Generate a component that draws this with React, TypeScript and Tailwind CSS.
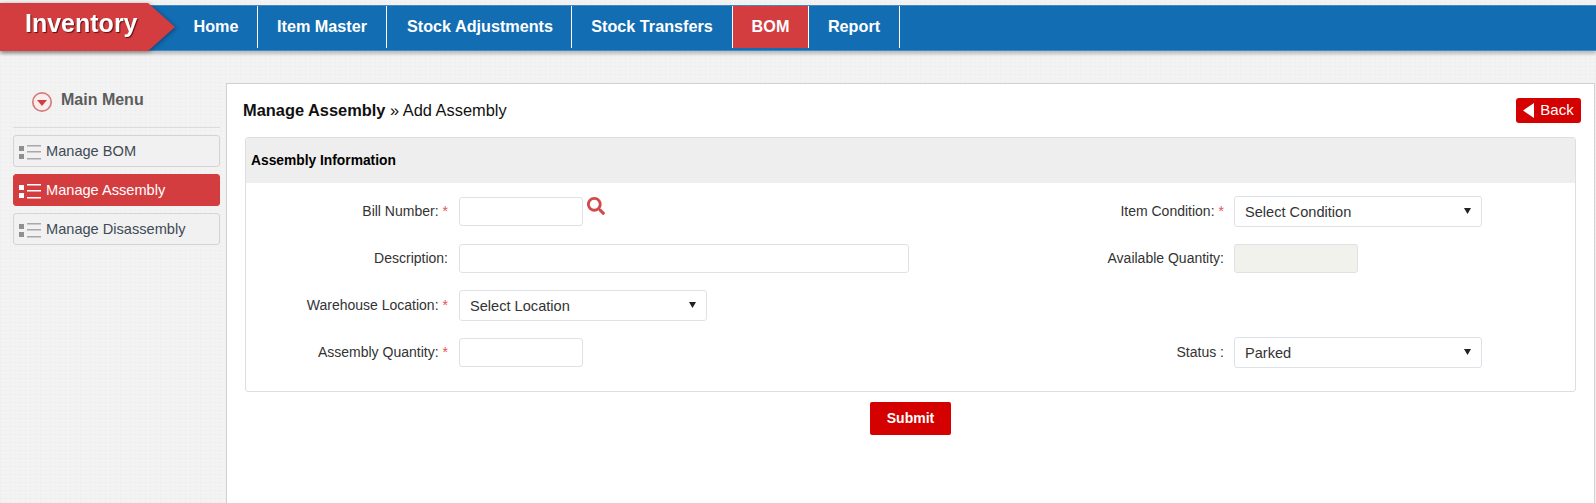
import { FaSearch } from "react-icons/fa";

const navItems = [
  { label: "Home", width: "w-[83px]" },
  { label: "Item Master", width: "w-[129px]" },
  { label: "Stock Adjustments", width: "w-[185px] pl-[2px]" },
  { label: "Stock Transfers", width: "w-[161px]" },
  { label: "BOM", width: "w-[76px]", active: true },
  { label: "Report", width: "w-[91px]" },
];

const menuItems = [
  { label: "Manage BOM" },
  { label: "Manage Assembly", active: true },
  { label: "Manage Disassembly" },
];

function ListIcon({ active }: { active?: boolean }) {
  const square = active ? "#ffffff" : "#8f8f8f";
  const line = active ? "#ffffff" : "#a8a8a8";
  return (
    <svg width="23" height="16" viewBox="0 0 23 16" className="shrink-0">
      <rect x="0" y="2" width="5" height="5" fill={square} />
      <rect x="0" y="10" width="5" height="5" fill={square} />
      <rect x="8" y="1" width="14" height="1.5" fill={line} />
      <rect x="8" y="7" width="14" height="1.5" fill={line} />
      <rect x="8" y="14" width="14" height="1.5" fill={line} />
    </svg>
  );
}

function Label({ text, required, width }: { text: string; required?: boolean; width: string }) {
  return (
    <label className={`${width} shrink-0 text-right text-[14px] text-[#333]`}>
      {text}
      {required && <span className="text-[#e55353] ml-[4px]">*</span>}
    </label>
  );
}

function TextInput({ width, disabled }: { width: string; disabled?: boolean }) {
  return (
    <input
      type="text"
      disabled={disabled}
      className={`${width} h-[29px] rounded-[3px] border border-[#dde1e8] ${disabled ? "bg-[#f2f2ec]" : "bg-white"}`}
    />
  );
}

function Select({ value }: { value: string }) {
  return (
    <div className="relative w-[248px] h-[31px]">
      <select
        defaultValue={value}
        className="w-full h-full appearance-none rounded-[3px] border border-[#dde1e8] bg-white pl-[10px] pt-[2px] text-[14.6px] text-[#333]"
      >
        <option>{value}</option>
      </select>
      <svg width="7" height="6" viewBox="0 0 7 6" className="absolute right-[11px] top-[12px] pointer-events-none">
        <path d="M0 0h7L3.5 6z" fill="#222" />
      </svg>
    </div>
  );
}

export default function App() {
  return (
    <div className="h-[503px] overflow-hidden bg-[#f3f3f3] bg-[repeating-linear-gradient(0deg,rgba(0,0,0,0.012)_0px,rgba(0,0,0,0.012)_1px,transparent_1px,transparent_4px),repeating-linear-gradient(90deg,rgba(0,0,0,0.012)_0px,rgba(0,0,0,0.012)_1px,transparent_1px,transparent_5px)] pt-[5px] font-['Liberation_Sans',Arial,sans-serif]">
      <header className="flex h-[46px] bg-[#126db3] border-y border-[#3f8ac4] shadow-[0_3px_3px_rgba(0,0,0,0.22)]">
        <div className="-mt-[3px] h-[48px] w-[175px] shrink-0 drop-shadow-[1px_1px_2px_rgba(0,0,0,0.35)]">
          <div className="h-full bg-[#d33d3f] pl-[25px] pt-[2px] text-[25px] font-bold text-white [clip-path:polygon(0_0,148px_0,175px_50%,148px_100%,0_100%)] [text-shadow:1px_1px_1px_rgba(70,0,0,0.8)]">
            Inventory
          </div>
        </div>
        {navItems.map((item) => (
          <div
            key={item.label}
            className={`${item.width} mb-[2px] pb-[1px] flex items-center justify-center border-r border-white text-[16.2px] font-bold text-white ${item.active ? "bg-[#d33d3f]" : ""}`}
          >
            {item.label}
          </div>
        ))}
      </header>

      <div className="flex mt-[32px]">
        <aside className="w-[226px] shrink-0 pl-[13px] pr-[6px]">
          <div className="flex items-center gap-[8px] pl-[18px] h-[45px] pb-[11px] border-b border-[#dcdcdc]">
            <svg width="22" height="22" viewBox="0 0 22 22" className="mt-[5px]">
              <circle cx="11" cy="11" r="9.2" fill="#f8eeee" stroke="#d97a7b" strokeWidth="1.7" />
              <path d="M6 9h10l-5 6z" fill="#d33d3f" />
            </svg>
            <span className="text-[16px] font-bold text-[#5c5c5c]">Main Menu</span>
          </div>
          <div className="mt-[7px] flex flex-col gap-[7px]">
            {menuItems.map((item) => (
              <div
                key={item.label}
                className={`flex h-[32px] items-center gap-[4px] rounded-[3px] border pl-[5px] pt-[2px] text-[14.6px] ${
                  item.active
                    ? "border-[#d33d3f] bg-[#d33d3f] text-white"
                    : "border-[#d4d4d4] bg-[#f1f1f1] text-[#3f4a55]"
                }`}
              >
                <ListIcon active={item.active} />
                {item.label}
              </div>
            ))}
          </div>
        </aside>

        <main className="mr-[1px] h-[440px] flex-1 border border-[#d2d2d2] bg-white pl-[18px] pr-[18px]">
          <div className="flex h-[53px] items-center justify-between pb-[1px]">
            <div className="-ml-[2px] text-[16.4px] text-[#111]">
              <span className="font-bold">Manage Assembly</span> » Add Assembly
            </div>
            <button className="-mr-[5px] flex h-[25px] w-[65px] items-center justify-center gap-[6px] rounded-[3px] bg-[#d50000] text-[15px] text-white">
              <svg width="11" height="15" viewBox="0 0 11 15">
                <path d="M11 0v15L0 7.5z" fill="#fff" />
              </svg>
              Back
            </button>
          </div>

          <section className="h-[255px] rounded-[3px] border border-[#dedede]">
            <div className="flex h-[45px] items-center bg-[#eeeeee] pl-[5px] pt-[2px] text-[13.8px] font-bold text-black">
              Assembly Information
            </div>
            <div className="grid grid-cols-[664px_1fr] pt-[5px]">
              <div className="flex h-[47px] items-center gap-[11px]">
                <Label text="Bill Number:" required width="w-[202px]" />
                <TextInput width="w-[124px]" />
                <FaSearch className="-ml-[7px] mb-[11px] text-[18px] text-[#d04a4a]" />
              </div>
              <div className="flex h-[47px] items-center gap-[10px]">
                <Label text="Item Condition:" required width="w-[314px]" />
                <Select value="Select Condition" />
              </div>

              <div className="flex h-[47px] items-center gap-[11px]">
                <Label text="Description:" width="w-[202px]" />
                <TextInput width="w-[450px]" />
              </div>
              <div className="flex h-[47px] items-center gap-[10px]">
                <Label text="Available Quantity:" width="w-[314px]" />
                <TextInput width="w-[124px]" disabled />
              </div>

              <div className="flex h-[47px] items-center gap-[11px]">
                <Label text="Warehouse Location:" required width="w-[202px]" />
                <Select value="Select Location" />
              </div>
              <div className="h-[47px]" />

              <div className="flex h-[47px] items-center gap-[11px]">
                <Label text="Assembly Quantity:" required width="w-[202px]" />
                <TextInput width="w-[124px]" />
              </div>
              <div className="flex h-[47px] items-center gap-[10px]">
                <Label text="Status :" width="w-[314px]" />
                <Select value="Parked" />
              </div>
            </div>
          </section>

          <div className="mt-[10px] flex justify-center">
            <button className="h-[33px] w-[81px] rounded-[2px] bg-[#d50000] text-[14px] font-bold text-white">
              Submit
            </button>
          </div>
        </main>
      </div>
    </div>
  );
}
